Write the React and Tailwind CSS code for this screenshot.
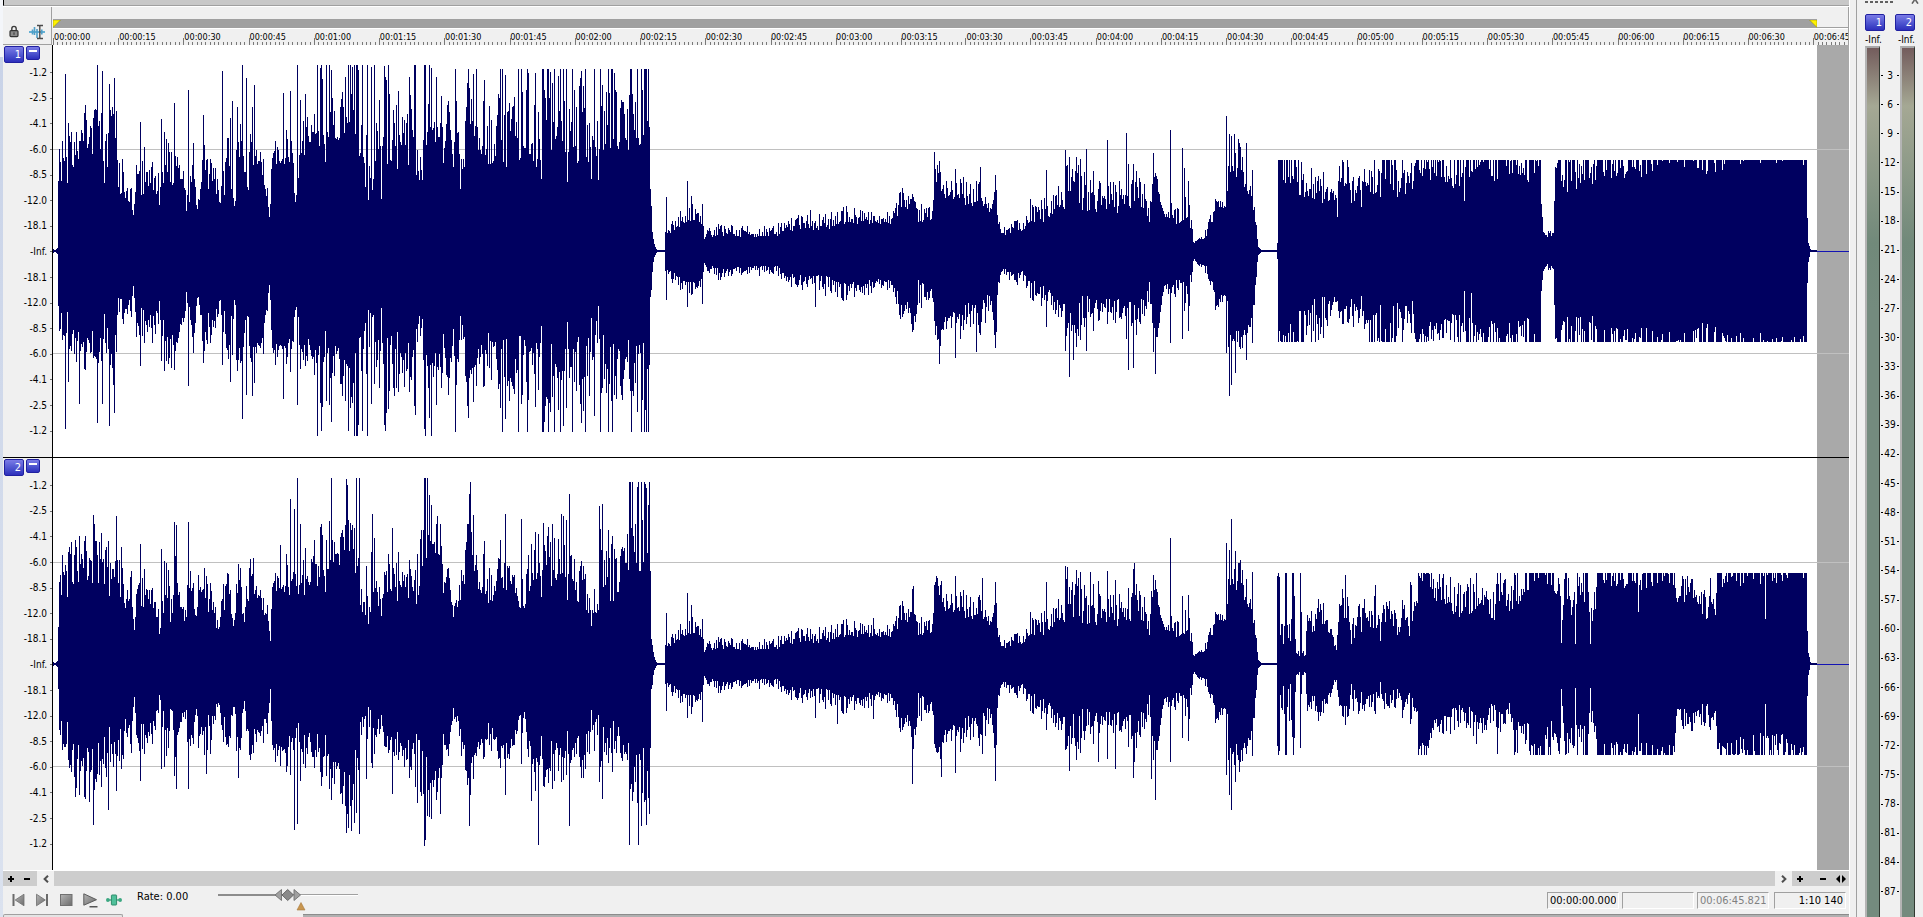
import React from "react";

const INK = "#000060";
const PLOT_W = 1796;
const PLOT_H = 412;
const MID = 206;
const SECONDS = 413;

/* Envelope knots: [x, topBase, topPeak, bottomBase, bottomPeak] */
const LEFT_INTRO = [
  [0, 1, 4, 1, 4],
  [4, 1, 4, 1, 4],
];

const MIDDLE = [
  [599, 20, 30, 22, 32],
  [600, 8, 12, 8, 12],
  [602, 3, 4, 3, 4],
  [604, 1, 1, 1, 1],
  [611, 1, 1, 1, 1],
  [612, 15, 20, 15, 20],
  [617, 18, 28, 20, 30],
  [630, 28, 42, 30, 44],
  [641, 30, 50, 32, 46],
  [648, 28, 42, 28, 42],
  [651, 13, 22, 12, 20],
  [666, 15, 27, 18, 28],
  [723, 14, 26, 13, 25],
  [730, 20, 32, 22, 34],
  [755, 22, 38, 25, 40],
  [775, 22, 38, 25, 42],
  [791, 27, 44, 33, 50],
  [820, 26, 40, 28, 42],
  [838, 27, 38, 28, 38],
  [843, 32, 50, 34, 55],
  [850, 50, 80, 60, 78],
  [854, 38, 55, 50, 60],
  [861, 45, 64, 60, 95],
  [865, 30, 45, 30, 60],
  [878, 30, 52, 38, 50],
  [881, 60, 95, 60, 98],
  [888, 60, 85, 80, 102],
  [896, 48, 75, 58, 75],
  [903, 55, 82, 65, 92],
  [913, 43, 70, 45, 85],
  [925, 50, 80, 60, 92],
  [935, 40, 55, 40, 80],
  [943, 45, 65, 60, 92],
  [945, 20, 34, 20, 40],
  [956, 15, 26, 15, 28],
  [959, 22, 40, 22, 40],
  [970, 20, 28, 20, 32],
  [977, 28, 48, 30, 50],
  [992, 30, 60, 35, 60],
  [1008, 40, 62, 50, 68],
  [1014, 45, 98, 55, 92],
  [1032, 35, 85, 40, 88],
  [1044, 40, 82, 50, 78],
  [1056, 35, 72, 45, 68],
  [1071, 40, 88, 50, 95],
  [1079, 45, 82, 50, 92],
  [1091, 45, 66, 50, 66],
  [1096, 25, 40, 25, 45],
  [1099, 60, 88, 60, 102],
  [1105, 60, 82, 80, 102],
  [1109, 33, 50, 35, 50],
  [1123, 22, 44, 22, 44],
  [1135, 30, 55, 35, 60],
  [1139, 15, 25, 15, 25],
  [1140, 8, 10, 8, 11],
  [1150, 10, 16, 12, 18],
  [1156, 20, 32, 20, 32],
  [1162, 40, 52, 40, 58],
  [1172, 45, 52, 45, 56],
  [1177, 75, 112, 82, 122],
  [1186, 70, 112, 80, 104],
  [1194, 60, 84, 80, 96],
  [1200, 40, 62, 50, 78],
  [1203, 20, 26, 20, 28],
  [1205, 3, 4, 3, 4],
  [1208, 1, 1, 1, 1],
  [1223, 1, 1, 1, 1],
];

const CHANNEL_ONE = {
  clips: [
    [0, 385, 186, 185],
    [385, 620, 182, 181],
    [620, 1223, 206, 206],
    [1223, 1796, 91, 91],
  ],
  knots: [
    ...LEFT_INTRO,
    [5, 63, 100, 54, 70],
    [7, 90, 125, 80, 105],
    [20, 85, 124, 78, 115],
    [35, 110, 158, 92, 115],
    [43, 125, 165, 100, 120],
    [50, 85, 140, 85, 115],
    [60, 90, 150, 70, 125],
    [65, 52, 90, 40, 62],
    [72, 55, 90, 60, 80],
    [80, 35, 60, 35, 60],
    [83, 75, 120, 75, 112],
    [95, 60, 100, 65, 92],
    [105, 55, 92, 60, 90],
    [110, 85, 125, 90, 116],
    [120, 55, 88, 70, 112],
    [124, 85, 125, 88, 116],
    [134, 37, 70, 42, 60],
    [140, 70, 112, 85, 102],
    [145, 30, 52, 40, 45],
    [149, 90, 110, 90, 105],
    [160, 68, 95, 70, 88],
    [167, 48, 70, 48, 75],
    [171, 70, 130, 78, 112],
    [181, 42, 110, 50, 112],
    [190, 75, 130, 90, 122],
    [193, 50, 90, 50, 80],
    [198, 85, 125, 95, 115],
    [210, 75, 100, 85, 102],
    [216, 28, 50, 28, 42],
    [219, 85, 118, 95, 115],
    [230, 92, 120, 98, 118],
    [238, 88, 140, 90, 112],
    [242, 40, 60, 50, 75],
    [246, 92, 155, 95, 115],
    [260, 105, 160, 98, 128],
    [266, 108, 200, 100, 180],
    [280, 112, 205, 98, 170],
    [305, 104, 205, 92, 195],
    [313, 50, 140, 55, 150],
    [318, 50, 180, 48, 140],
    [325, 95, 195, 90, 185],
    [327, 42, 120, 52, 110],
    [332, 88, 190, 85, 180],
    [345, 82, 160, 85, 150],
    [360, 90, 190, 90, 145],
    [368, 50, 90, 50, 90],
    [372, 112, 205, 110, 190],
    [385, 105, 195, 105, 160],
    [395, 98, 150, 98, 140],
    [403, 90, 190, 92, 165],
    [406, 58, 110, 58, 100],
    [415, 108, 200, 102, 170],
    [430, 95, 165, 98, 145],
    [445, 85, 195, 88, 165],
    [460, 88, 200, 85, 180],
    [480, 85, 185, 88, 155],
    [500, 100, 200, 98, 190],
    [520, 90, 190, 88, 175],
    [540, 80, 200, 85, 175],
    [544, 36, 130, 38, 90],
    [548, 100, 212, 95, 190],
    [575, 105, 212, 92, 190],
    [594, 108, 220, 100, 190],
    [596, 118, 125, 105, 115],
    [597, 60, 64, 44, 48],
    ...MIDDLE,
    [1224, 8, 10, 8, 10],
    [1225, 70, 120, 80, 140],
    [1249, 54, 100, 60, 130],
    [1262, 52, 88, 45, 110],
    [1278, 48, 70, 45, 75],
    [1284, 50, 80, 46, 68],
    [1292, 66, 100, 58, 76],
    [1299, 46, 72, 44, 72],
    [1310, 45, 78, 48, 68],
    [1316, 52, 105, 55, 140],
    [1343, 50, 110, 50, 120],
    [1360, 66, 86, 50, 78],
    [1366, 80, 140, 85, 150],
    [1379, 72, 120, 72, 95],
    [1394, 68, 90, 68, 86],
    [1412, 62, 125, 62, 110],
    [1421, 76, 130, 70, 110],
    [1437, 68, 130, 68, 120],
    [1475, 72, 130, 70, 120],
    [1487, 82, 150, 88, 150],
    [1488, 47, 50, 38, 42],
    [1490, 17, 20, 18, 20],
    [1494, 14, 20, 14, 18],
    [1500, 16, 22, 16, 22],
    [1502, 82, 140, 88, 150],
    [1513, 60, 130, 68, 130],
    [1540, 66, 140, 66, 150],
    [1551, 74, 150, 80, 160],
    [1590, 78, 160, 80, 160],
    [1628, 86, 170, 82, 160],
    [1636, 84, 150, 74, 130],
    [1662, 78, 150, 76, 130],
    [1674, 88, 180, 84, 150],
    [1753, 90, 180, 88, 170],
    [1754, 33, 34, 33, 34],
    [1755, 6, 8, 10, 11],
    [1757, 1, 2, 1, 2],
    [1759, 1, 1, 1, 1],
    [1763, 1, 1, 1, 1],
  ],
  spikes: [
    [12, 177, 178], [15, 128, 131], [26, 110, 153], [44, 201, 172], [45, 125, 112], [49, 180, 153], [56, 167, 175], [61, 173, 162], [63, 140, 101],
    [87, 129, 115], [108, 132, 110], [121, 148, 119], [135, 161, 135], [150, 136, 112], [169, 180, 114], [177, 133, 131],
    [179, 150, 104], [184, 144, 120], [189, 186, 168], [193, 173, 144], [199, 144, 145], [201, 166, 132],
    [230, 158, 148], [237, 160, 121], [244, 186, 154], [247, 151, 118], [264, 186, 185], [273, 186, 150],
    [303, 186, 185], [304, 186, 185], [309, 186, 180], [314, 186, 185], [361, 186, 155], [362, 186, 164],
    [371, 186, 178], [378, 183, 185], [402, 182, 181], [415, 182, 167], [423, 182, 135], [449, 182, 181],
    [465, 182, 181], [474, 182, 181], [489, 182, 181], [490, 182, 181], [507, 182, 181], [519, 182, 181],
    [532, 182, 181], [547, 182, 181], [555, 182, 181], [578, 182, 181], [591, 182, 181], [595, 182, 181],
    [613, 54, 49], [634, 70, 56], [638, 55, 44], [649, 47, 53], [757, 41, 28], [762, 30, 56], [881, 99, 70], [886, 90, 113],
    [902, 82, 107], [923, 70, 101], [927, 84, 84], [942, 76, 97], [993, 81, 76], [1012, 101, 100], [1016, 94, 126],
    [1020, 70, 109], [1033, 102, 100], [1054, 111, 73], [1073, 118, 88], [1075, 87, 119], [1080, 87, 117],
    [1100, 98, 101], [1102, 78, 123], [1117, 121, 92], [1129, 103, 88], [1131, 83, 60], [1135, 70, 80], [1173, 135, 102],
    [1174, 60, 50], [1176, 117, 145], [1178, 115, 134], [1181, 117, 90], [1182, 98, 122], [1185, 112, 80], [1193, 108, 109], [1199, 81, 92],
    [1226, 91, 80], [1227, 91, 90], [1284, 34, 50], [1411, 50, 40], [1418, 80, 42],
  ],
};

const CHANNEL_TWO = {
  clips: [
    [0, 400, 186, 184],
    [400, 620, 182, 181],
    [620, 1223, 206, 206],
    [1223, 1796, 91, 91],
  ],
  knots: [
    ...LEFT_INTRO,
    [5, 30, 60, 20, 50],
    [7, 90, 122, 72, 104],
    [20, 80, 130, 78, 130],
    [36, 90, 135, 90, 128],
    [43, 110, 142, 108, 132],
    [55, 100, 130, 90, 128],
    [58, 60, 92, 68, 90],
    [63, 72, 120, 62, 110],
    [70, 56, 90, 55, 98],
    [78, 62, 100, 60, 88],
    [81, 35, 50, 35, 42],
    [84, 78, 112, 80, 112],
    [94, 64, 90, 68, 88],
    [101, 52, 78, 52, 76],
    [107, 38, 55, 38, 50],
    [109, 62, 108, 60, 96],
    [114, 58, 102, 58, 98],
    [118, 28, 62, 32, 45],
    [122, 82, 120, 68, 110],
    [127, 55, 95, 58, 86],
    [131, 38, 55, 34, 58],
    [136, 75, 120, 72, 118],
    [142, 42, 66, 42, 60],
    [147, 72, 104, 68, 94],
    [157, 62, 88, 60, 92],
    [165, 30, 44, 36, 45],
    [170, 72, 102, 70, 95],
    [175, 62, 95, 66, 85],
    [180, 38, 50, 38, 60],
    [185, 70, 110, 72, 110],
    [191, 35, 62, 34, 52],
    [195, 66, 112, 68, 100],
    [205, 60, 85, 60, 84],
    [214, 46, 62, 56, 72],
    [217, 23, 30, 26, 32],
    [219, 72, 94, 80, 96],
    [234, 76, 118, 88, 112],
    [240, 52, 110, 50, 90],
    [247, 78, 145, 78, 124],
    [254, 62, 105, 62, 110],
    [260, 88, 158, 86, 112],
    [274, 92, 140, 92, 128],
    [282, 112, 158, 102, 160],
    [290, 114, 155, 98, 170],
    [300, 98, 150, 90, 165],
    [307, 55, 105, 58, 96],
    [316, 38, 100, 38, 90],
    [321, 78, 126, 72, 98],
    [327, 46, 70, 50, 68],
    [335, 78, 108, 78, 92],
    [345, 62, 112, 70, 100],
    [353, 70, 108, 76, 114],
    [365, 58, 108, 62, 132],
    [371, 108, 190, 88, 185],
    [377, 118, 168, 118, 158],
    [386, 108, 142, 108, 134],
    [392, 78, 104, 80, 98],
    [405, 43, 70, 40, 62],
    [408, 78, 122, 78, 112],
    [417, 90, 175, 84, 132],
    [426, 72, 126, 80, 102],
    [436, 66, 114, 72, 96],
    [452, 78, 132, 84, 112],
    [462, 62, 104, 58, 92],
    [471, 48, 100, 48, 74],
    [479, 82, 128, 88, 122],
    [485, 92, 145, 98, 134],
    [495, 76, 132, 80, 118],
    [507, 82, 140, 82, 118],
    [517, 88, 160, 92, 122],
    [523, 66, 98, 74, 102],
    [531, 54, 116, 78, 124],
    [544, 38, 60, 45, 70],
    [547, 88, 160, 82, 118],
    [560, 54, 138, 58, 108],
    [570, 95, 158, 78, 114],
    [576, 96, 215, 88, 165],
    [596, 90, 190, 98, 155],
    [597, 92, 94, 84, 86],
    [598, 24, 26, 24, 26],
    ...MIDDLE,
    [1224, 91, 92, 84, 91],
    [1226, 91, 92, 91, 92],
    [1227, 16, 42, 14, 50],
    [1231, 16, 50, 14, 62],
    [1240, 18, 52, 18, 60],
    [1243, 8, 14, 8, 13],
    [1252, 8, 18, 8, 14],
    [1254, 45, 74, 42, 62],
    [1260, 30, 50, 30, 45],
    [1265, 48, 72, 42, 62],
    [1274, 33, 52, 32, 42],
    [1283, 11, 30, 10, 32],
    [1287, 50, 70, 35, 48],
    [1293, 42, 72, 42, 60],
    [1299, 14, 42, 11, 42],
    [1305, 32, 60, 30, 48],
    [1322, 32, 76, 28, 50],
    [1327, 20, 62, 18, 42],
    [1337, 40, 60, 26, 46],
    [1345, 25, 60, 25, 46],
    [1352, 45, 75, 35, 62],
    [1356, 24, 40, 26, 36],
    [1358, 44, 80, 34, 56],
    [1364, 48, 62, 35, 46],
    [1365, 88, 140, 86, 120],
    [1376, 86, 120, 78, 92],
    [1380, 62, 92, 55, 68],
    [1395, 58, 86, 50, 72],
    [1410, 42, 80, 38, 62],
    [1425, 52, 92, 50, 82],
    [1437, 42, 76, 40, 66],
    [1456, 48, 92, 38, 62],
    [1463, 52, 94, 58, 90],
    [1475, 78, 120, 62, 92],
    [1483, 84, 140, 84, 120],
    [1498, 78, 130, 58, 96],
    [1506, 60, 110, 84, 110],
    [1508, 22, 30, 25, 40],
    [1511, 82, 130, 80, 110],
    [1519, 42, 62, 58, 92],
    [1525, 72, 125, 66, 110],
    [1535, 46, 110, 46, 100],
    [1541, 40, 80, 50, 74],
    [1544, 82, 130, 82, 140],
    [1580, 78, 140, 82, 150],
    [1618, 78, 140, 82, 140],
    [1624, 62, 92, 44, 62],
    [1643, 66, 88, 48, 68],
    [1651, 46, 80, 40, 62],
    [1663, 48, 100, 48, 78],
    [1668, 80, 150, 82, 130],
    [1700, 80, 150, 72, 110],
    [1730, 84, 150, 72, 100],
    [1740, 88, 170, 84, 120],
    [1753, 90, 170, 88, 110],
    [1754, 34, 35, 33, 34],
    [1755, 8, 12, 10, 11],
    [1757, 1, 2, 1, 2],
    [1759, 1, 1, 1, 1],
    [1763, 1, 1, 1, 1],
  ],
  spikes: [
    [22, 124, 133], [26, 128, 131], [36, 106, 138], [40, 149, 161], [41, 140, 126], [55, 123, 146], [63, 148, 127], [68, 117, 105], [87, 120, 117], [108, 115, 105],
    [121, 142, 112], [123, 139, 125], [135, 142, 125], [153, 88, 110], [185, 100, 114], [200, 106, 89], [227, 119, 102],
    [237, 165, 111], [241, 155, 166], [244, 186, 160], [278, 186, 136], [293, 185, 169], [294, 179, 150], [298, 134, 167],
    [303, 186, 149], [306, 186, 170], [313, 98, 115], [319, 150, 104], [339, 136, 130], [364, 110, 139], [371, 186, 182],
    [374, 186, 152], [378, 159, 155], [384, 148, 128], [387, 140, 150], [416, 170, 162], [417, 182, 131], [452, 150, 131],
    [468, 145, 100], [478, 120, 137], [485, 130, 181], [490, 141, 122], [499, 140, 125], [508, 150, 118], [516, 170, 162], [546, 158, 118], [549, 160, 135],
    [576, 182, 181], [579, 182, 137], [585, 182, 181], [591, 182, 138], [595, 159, 134],
    [613, 51, 47], [634, 71, 54], [638, 59, 50], [649, 45, 58], [757, 35, 34], [762, 30, 54], [784, 40, 60], [820, 46, 55], [859, 75, 120],
    [860, 78, 85], [883, 88, 88], [888, 83, 113], [902, 88, 109], [929, 86, 90], [942, 82, 117], [993, 82, 66],
    [1012, 98, 86], [1014, 97, 82], [1016, 77, 107], [1037, 92, 70], [1045, 83, 98], [1054, 93, 95], [1062, 84, 105], [1080, 95, 114],
    [1081, 101, 98], [1098, 73, 115], [1100, 89, 96], [1102, 84, 136], [1117, 126, 98], [1129, 68, 74], [1135, 69, 77], [1173, 121, 111],
    [1174, 60, 50], [1176, 114, 131], [1178, 145, 146], [1182, 113, 118], [1186, 101, 108], [1199, 92, 92],
    [1232, 91, 91], [1233, 91, 91], [1239, 91, 73], [1240, 91, 91], [1241, 68, 74], [1247, 91, 84], [1248, 52, 30], [1292, 89, 61], [1322, 79, 50],
    [1357, 82, 60], [1423, 91, 80], [1444, 91, 90], [1447, 91, 68], [1461, 91, 91], [1522, 20, 24], [1537, 20, 24], [1585, 52, 50],
    [1712, 45, 40],
  ],
};

function makeRandom(seed) {
  let state = seed;
  return () => {
    state = (state * 1664525 + 1013904223) % 4294967296;
    return state / 4294967296;
  };
}

function tracePath({ knots, spikes, clips }, seed) {
  const random = makeRandom(seed);
  const fixed = new Map(spikes.map(([x, up, down]) => [x, [up, down]]));
  const end = knots[knots.length - 1][0];
  let k = 0;
  let path = "";
  for (let x = 0; x <= end; x += 1) {
    while (k < knots.length - 2 && knots[k + 1][0] <= x) k += 1;
    const a = knots[k];
    const b = knots[k + 1];
    const t = Math.min(1, (x - a[0]) / (b[0] - a[0]));
    const at = (i) => a[i] + (b[i] - a[i]) * t;
    const shared = random();
    const u = Math.pow(shared * 0.8 + random() * 0.2, 1.6);
    const v = Math.pow(shared * 0.8 + random() * 0.2, 1.6);
    const dip = x < 597 && random() < 0.1 ? 0.78 : 1;
    const clip = clips.find((c) => x >= c[0] && x < c[1]);
    const [up, down] = fixed.get(x) || [
      (at(1) * 0.95 + (at(2) - at(1) * 0.95) * u * 1.2) * dip,
      (at(3) * 0.95 + (at(4) - at(3) * 0.95) * v * 1.2) * dip,
    ];
    const top = MID - Math.round(Math.min(up, clip[2]));
    const bottom = MID + Math.round(Math.min(down, clip[3]));
    path += `M${x} ${top}h1V${Math.max(bottom, top + 1)}h-1z`;
  }
  return path;
}

const PATH_ONE = tracePath(CHANNEL_ONE, 7);
const PATH_TWO = tracePath(CHANNEL_TWO, 7);

const LEVELS = ["-1.2", "-2.5", "-4.1", "-6.0", "-8.5", "-12.0", "-18.1"];
const SCALE = [...LEVELS, "-Inf.", ...[...LEVELS].reverse()];
const METER_MARKS = Array.from({ length: 29 }, (_, i) => (i + 1) * 3);
const STAMPS = Array.from({ length: 28 }, (_, i) => {
  const s = i * 15;
  const pad = (n) => String(n).padStart(2, "0");
  return { text: `00:${pad(Math.floor(s / 60))}:${pad(s % 60)}`, span: Math.min(15, SECONDS - s) };
});

const TICKS = Array.from({ length: Math.floor(SECONDS) + 1 }, (_, s) => {
  const x = Math.round((s * PLOT_W) / SECONDS);
  return `M${x} ${s % 15 === 0 ? 0 : 4}h1V7h-1z`;
}).join("");

function Badge({ children, className, label }) {
  return (
    <button
      type="button"
      aria-label={label}
      className={`flex rounded-xs border border-[#2020a0] bg-linear-to-b from-[#7b7be6] to-[#2e2ebc] text-white ${className}`}
    >
      {children}
    </button>
  );
}

function Track({ number, path }) {
  return (
    <section aria-label={`Channel ${number}`} className="flex min-h-0 flex-1">
      <div className="relative flex w-[50px] shrink-0 flex-col border-r border-black bg-[#f0f0f0]">
        <div className="absolute top-px left-px flex items-start gap-0.5">
          <Badge className="h-[17px] w-5 items-center justify-end pr-0.5 text-[11px] leading-none">{number}</Badge>
          <Badge label={`Minimize channel ${number}`} className="h-3.5 w-3.5 justify-center pt-[3px]">
            <span className="h-0.5 w-2 bg-white" />
          </Badge>
        </div>
        <div className="flex flex-1 flex-col pt-[15px] pb-[13px]">
          {SCALE.map((label, i) => (
            <div key={i} className="flex flex-1 items-center justify-end gap-[3px]">
              <span className="text-[10px] leading-none">{label}</span>
              <span className="h-px w-0.5 bg-[#707070]" />
            </div>
          ))}
        </div>
      </div>
      <svg
        className="block h-full min-w-0 flex-1 bg-white"
        viewBox={`0 0 ${PLOT_W} ${PLOT_H}`}
        preserveAspectRatio="none"
        shapeRendering="crispEdges"
        role="img"
        aria-label={`Waveform of channel ${number}`}
      >
        <rect x="1764" y="0" width="32" height={PLOT_H} fill="#a9a9a9" />
        <rect x="0" y="104" width={PLOT_W} height="1" fill="#c0c0c0" />
        <rect x="0" y="308" width={PLOT_W} height="1" fill="#c0c0c0" />
        <rect x="1764" y={MID} width="32" height="1" fill="#1414b4" />
        <path d={path} fill={INK} />
      </svg>
    </section>
  );
}

function Meter() {
  return (
    <div className="w-[15px] border-t-2 border-r border-l-2 border-t-[#a8a8a8] border-r-[#303830] border-l-[#b4b4b4] bg-[linear-gradient(to_bottom,#735c5c_0px,#a5a894_58px,#71897a_195px,#748b7e_260px)]" />
  );
}

function MeterPanel() {
  return (
    <aside aria-label="Channel meters" className="flex w-[67px] shrink-0 flex-col border-l border-[#a0a0a0] pl-2">
      <div className="flex h-3.5 items-start justify-between pr-1">
        <div className="mt-px h-0.5 w-[29px] bg-[repeating-linear-gradient(to_right,#606060_0px,#606060_3px,#f0f0f0_3px,#f0f0f0_5px)]" />
        <button type="button" aria-label="Close meters" className="h-1 w-2">
          <svg viewBox="0 0 8 4" className="block h-1 w-2" fill="none" stroke="#606060" strokeWidth="1.6">
            <path d="M3.5 0 L1 3.6 M4.5 0 L7 3.6" />
          </svg>
        </button>
      </div>
      <div className="flex gap-2.5">
        <Badge className="h-[17px] w-5 items-center justify-end pr-0.5 text-[11px] leading-none">1</Badge>
        <Badge className="h-[17px] w-5 items-center justify-end pr-0.5 text-[11px] leading-none">2</Badge>
      </div>
      <div className="flex h-[15px] items-center gap-4 pt-0.5 text-[10px] leading-none">
        <span>-Inf.</span>
        <span>-Inf.</span>
      </div>
      <div className="flex min-h-0 flex-1">
        <Meter />
        <div className="flex w-5 flex-col pt-[15px] pb-[11px]">
          {METER_MARKS.map((mark) => (
            <div key={mark} className="flex flex-1 items-center justify-between px-px text-[10px] leading-none">
              <span className="h-px w-0.5 bg-black" />
              <span>{mark}</span>
              <span className="h-px w-0.5 bg-black" />
            </div>
          ))}
        </div>
        <Meter />
      </div>
    </aside>
  );
}

function Header() {
  return (
    <header className="flex h-[39px] shrink-0 border-t border-white">
      <div className="flex w-[49px] shrink-0 items-end justify-between border-r border-b border-[#a0a0a0] pr-1.5 pb-1 pl-1.5">
        <button type="button" aria-label="Lock" className="h-4 w-2.5">
          <svg viewBox="0 0 10 14" className="block h-3.5 w-2.5">
            <path d="M2.8 6V3.8a2.2 2.4 0 0 1 4.4 0V6" fill="none" stroke="#3a3a3a" strokeWidth="1.4" />
            <rect x="1" y="5.6" width="8" height="6" rx="1" fill="#8a8a8a" stroke="#333" strokeWidth="1.2" />
            <path d="M5 7.4v2.4" stroke="#333" strokeWidth="1" />
          </svg>
        </button>
        <button type="button" aria-label="Edit tool" className="h-4 w-4">
          <svg viewBox="0 0 16 16" className="block h-4 w-4" fill="none">
            <path d="M0 8h16" stroke="#64b0d4" strokeWidth="2" />
            <path d="M3.5 5.5v5M5.5 3v8M8 5v9M12.8 5.5v5" stroke="#4f9fc8" strokeWidth="1.6" />
            <path d="M8 1.5h2.2l.6.6.6-.6H14M8 14.5h2.2l.6-.6.6.6H14M10.8 2v12" stroke="#4a4a4a" strokeWidth="1.4" />
          </svg>
        </button>
      </div>
      <div className="ml-px flex min-w-0 flex-1 flex-col border-r border-[#a0a0a0]">
        <div className="mt-3 flex h-[9px]">
          <div className="flex flex-[1764] items-start justify-between bg-[#a0a0a0] pt-px">
            <svg viewBox="0 0 8 8" className="block h-2 w-2">
              <path d="M0 0h7.5L0 7.5z" fill="#fff200" stroke="#8a8400" strokeWidth=".5" />
            </svg>
            <svg viewBox="0 0 8 8" className="block h-2 w-2">
              <path d="M8 0H.5L8 7.5z" fill="#fff200" stroke="#8a8400" strokeWidth=".5" />
            </svg>
          </div>
          <div className="flex-[31] border-b border-[#a0a0a0]" />
        </div>
        <div className="grid flex-1 border-t border-white">
          <svg
            className="col-start-1 row-start-1 block h-[7px] w-full self-end"
            viewBox={`0 0 ${PLOT_W} 7`}
            preserveAspectRatio="none"
            shapeRendering="crispEdges"
          >
            <path d={TICKS} fill="#787878" />
          </svg>
          <div className="col-start-1 row-start-1 flex pt-0.5">
            {STAMPS.map(({ text, span }) => (
              <span
                key={text}
                className="w-0 min-w-0 overflow-hidden pl-px text-[9px] leading-3 whitespace-nowrap"
                style={{ flexGrow: span }}
              >
                {text}
              </span>
            ))}
          </div>
        </div>
      </div>
    </header>
  );
}

function ScrollRow() {
  return (
    <div className="flex h-4 shrink-0 items-stretch border-t border-white bg-[#cdcdcd]">
      <button type="button" aria-label="Zoom in vertically" className="flex w-4 items-center justify-center">
        <svg viewBox="0 0 6 6" className="h-1.5 w-1.5" shapeRendering="crispEdges"><path d="M2 0h2v2h2v2H4v2H2V4H0V2h2z" /></svg>
      </button>
      <button type="button" aria-label="Zoom out vertically" className="mr-0.5 flex w-4 items-center justify-center">
        <svg viewBox="0 0 6 6" className="h-1.5 w-1.5" shapeRendering="crispEdges"><path d="M0 2h6v2H0z" /></svg>
      </button>
      <button type="button" aria-label="Scroll left" className="flex w-[17px] items-center justify-center bg-[#f0f0f0]">
        <svg viewBox="0 0 6 8" className="h-2 w-1.5" fill="none" stroke="#505050" strokeWidth="2"><path d="M5 .7 1.6 4 5 7.3" /></svg>
      </button>
      <div className="flex-1" />
      <button type="button" aria-label="Scroll right" className="flex w-[17px] items-center justify-center bg-[#f0f0f0]">
        <svg viewBox="0 0 6 8" className="h-2 w-1.5" fill="none" stroke="#505050" strokeWidth="2"><path d="M1 .7 4.4 4 1 7.3" /></svg>
      </button>
      <button type="button" aria-label="Zoom in" className="flex w-4 items-center justify-center">
        <svg viewBox="0 0 6 6" className="h-1.5 w-1.5" shapeRendering="crispEdges"><path d="M2 0h2v2h2v2H4v2H2V4H0V2h2z" /></svg>
      </button>
      <button type="button" aria-label="Zoom out" className="flex w-6 items-center justify-end pr-1.5">
        <svg viewBox="0 0 6 6" className="h-1.5 w-1.5" shapeRendering="crispEdges"><path d="M0 2h6v2H0z" /></svg>
      </button>
      <button type="button" aria-label="Drag zoom" className="flex w-[17px] items-center justify-center">
        <svg viewBox="0 0 10 8" className="h-2 w-2.5"><path d="M4 0v8L0 4zM6 0v8l4-4z" /></svg>
      </button>
    </div>
  );
}

function ToolButton({ label, children }) {
  return (
    <button type="button" aria-label={label} className="h-4 w-4">
      <svg viewBox="0 0 16 16" className="block h-4 w-4">
        {children}
      </svg>
    </button>
  );
}

function Readout({ label, value, className }) {
  return (
    <input
      aria-label={label}
      readOnly
      value={value}
      className={`h-[17px] w-[72px] border border-t-[#a0a0a0] border-r-white border-b-white border-l-[#a0a0a0] bg-transparent text-[11px] leading-none outline-none ${className}`}
    />
  );
}

function Transport() {
  return (
    <div className="flex h-7 shrink-0 items-start">
      <div className="flex gap-2 pt-1.5 pl-[7px]">
        <ToolButton label="Go to start">
          <path d="M2.5 2h2v12h-2z" fill="#6a6a6a" />
          <path d="M14 2.2v11.6L5.2 8z" fill="url(#steel)" stroke="#6e6e6e" strokeWidth=".8" />
        </ToolButton>
        <ToolButton label="Go to end">
          <path d="M12 2h2v12h-2z" fill="#6a6a6a" />
          <path d="M2.5 2.2v11.6L11.3 8z" fill="url(#steel)" stroke="#6e6e6e" strokeWidth=".8" />
        </ToolButton>
        <ToolButton label="Stop">
          <rect x="2.5" y="2.5" width="11.5" height="11" fill="url(#steel)" stroke="#707070" strokeWidth="1" />
        </ToolButton>
        <ToolButton label="Play">
          <path d="M1.8 1.8v11.4L14.5 7.7z" fill="url(#steel)" stroke="#5c5c5c" strokeWidth="1" />
          <path d="M7.5 14.8h8" stroke="#303030" strokeWidth="1.2" />
        </ToolButton>
        <ToolButton label="Scrub">
          <path d="M1 8h14" stroke="#3da882" strokeWidth="1.4" />
          <circle cx="1.9" cy="8" r="1.9" fill="#3da882" />
          <circle cx="14.1" cy="8" r="1.9" fill="#3da882" />
          <rect x="5.4" y="3" width="5.2" height="10" rx=".6" fill="#4fc09a" stroke="#2f8d6c" strokeWidth="1" />
        </ToolButton>
      </div>
      <label htmlFor="rate" className="w-[68px] shrink-0 pt-1 pl-[15px] text-[11px] leading-[13px] whitespace-nowrap">
        Rate: 0.00
      </label>
      <div className="relative ml-7 h-7 w-[140px]">
        <svg viewBox="0 0 140 28" className="block h-7 w-[140px]">
          <defs>
            <linearGradient id="steel" x1="0" y1="0" x2="1" y2="1">
              <stop offset="0" stopColor="#b4b4b4" />
              <stop offset="1" stopColor="#6c6c6c" />
            </linearGradient>
          </defs>
          <path d="M0 8h140v1H0z" fill="#a0a0a0" />
          <path d="M0 9h140v1H0z" fill="#ffffff" />
          <path d="M0 8h60v2H0z" fill="#8c8c8c" />
          <path d="M63.5 3.5v11L57 9zM76 3.5v11L82.5 9z" fill="#a0a0a0" stroke="#6e6e6e" strokeWidth=".9" />
          <path d="M69.7 3.5 75.5 9l-5.8 5.5L64 9z" fill="#8a8a8a" stroke="#606060" strokeWidth=".9" />
          <path d="M83 16.5 87 24h-8z" fill="#c89650" stroke="#a8783c" strokeWidth=".6" />
        </svg>
        <input id="rate" type="range" min="-100" max="100" defaultValue="0" className="absolute inset-x-0 top-0 h-4 w-full opacity-0" />
      </div>
      <div className="flex flex-1 items-center justify-end pt-1.5 pr-[3px]">
        <Readout label="Selection start" value="00:00:00.000" className="mr-[3px] px-0.5 text-black" />
        <Readout label="Selection end" value="" className="mr-[3px] px-0.5 text-black" />
        <Readout label="Selection length" value="00:06:45.821" className="mr-[5px] px-0.5 text-[#808080]" />
        <Readout label="Zoom ratio" value="1:10 140" className="pr-0.5 text-right text-black" />
      </div>
    </div>
  );
}

export default function App() {
  return (
    <div className="flex h-screen min-h-[600px] overflow-hidden bg-[#f0f0f0] font-['DejaVu_Sans_Condensed','DejaVu_Sans',sans-serif] text-black">
      <div className="w-[3px] shrink-0 bg-[linear-gradient(to_bottom,#f4f6fa_0px,#f4f6fa_57px,#c9d3e8_57px,#dbe2ef_100%)]" />
      <main className="flex min-w-0 flex-1 flex-col">
        <div className="h-1.5 shrink-0 border-b border-l border-b-[#a0a0a0] border-l-black bg-[#c8c8c8]" />
        <Header />
        <div className="flex min-h-0 flex-1 flex-col">
          <Track number={1} path={PATH_ONE} />
          <div className="h-px shrink-0 bg-black" />
          <Track number={2} path={PATH_TWO} />
        </div>
        <ScrollRow />
        <Transport />
        <div className="flex h-[3px] shrink-0">
          <div className="w-[120px] rounded-t-xs border border-b-0 border-[#a0a0a0] bg-[#e4e4e4]" />
          <div className="w-[180px]" />
          <div className="flex-1 border-t border-[#8c8c8c] bg-[#b0b0b0]" />
        </div>
      </main>
      <div className="w-[7px] shrink-0 border-l border-white" />
      <MeterPanel />
    </div>
  );
}
